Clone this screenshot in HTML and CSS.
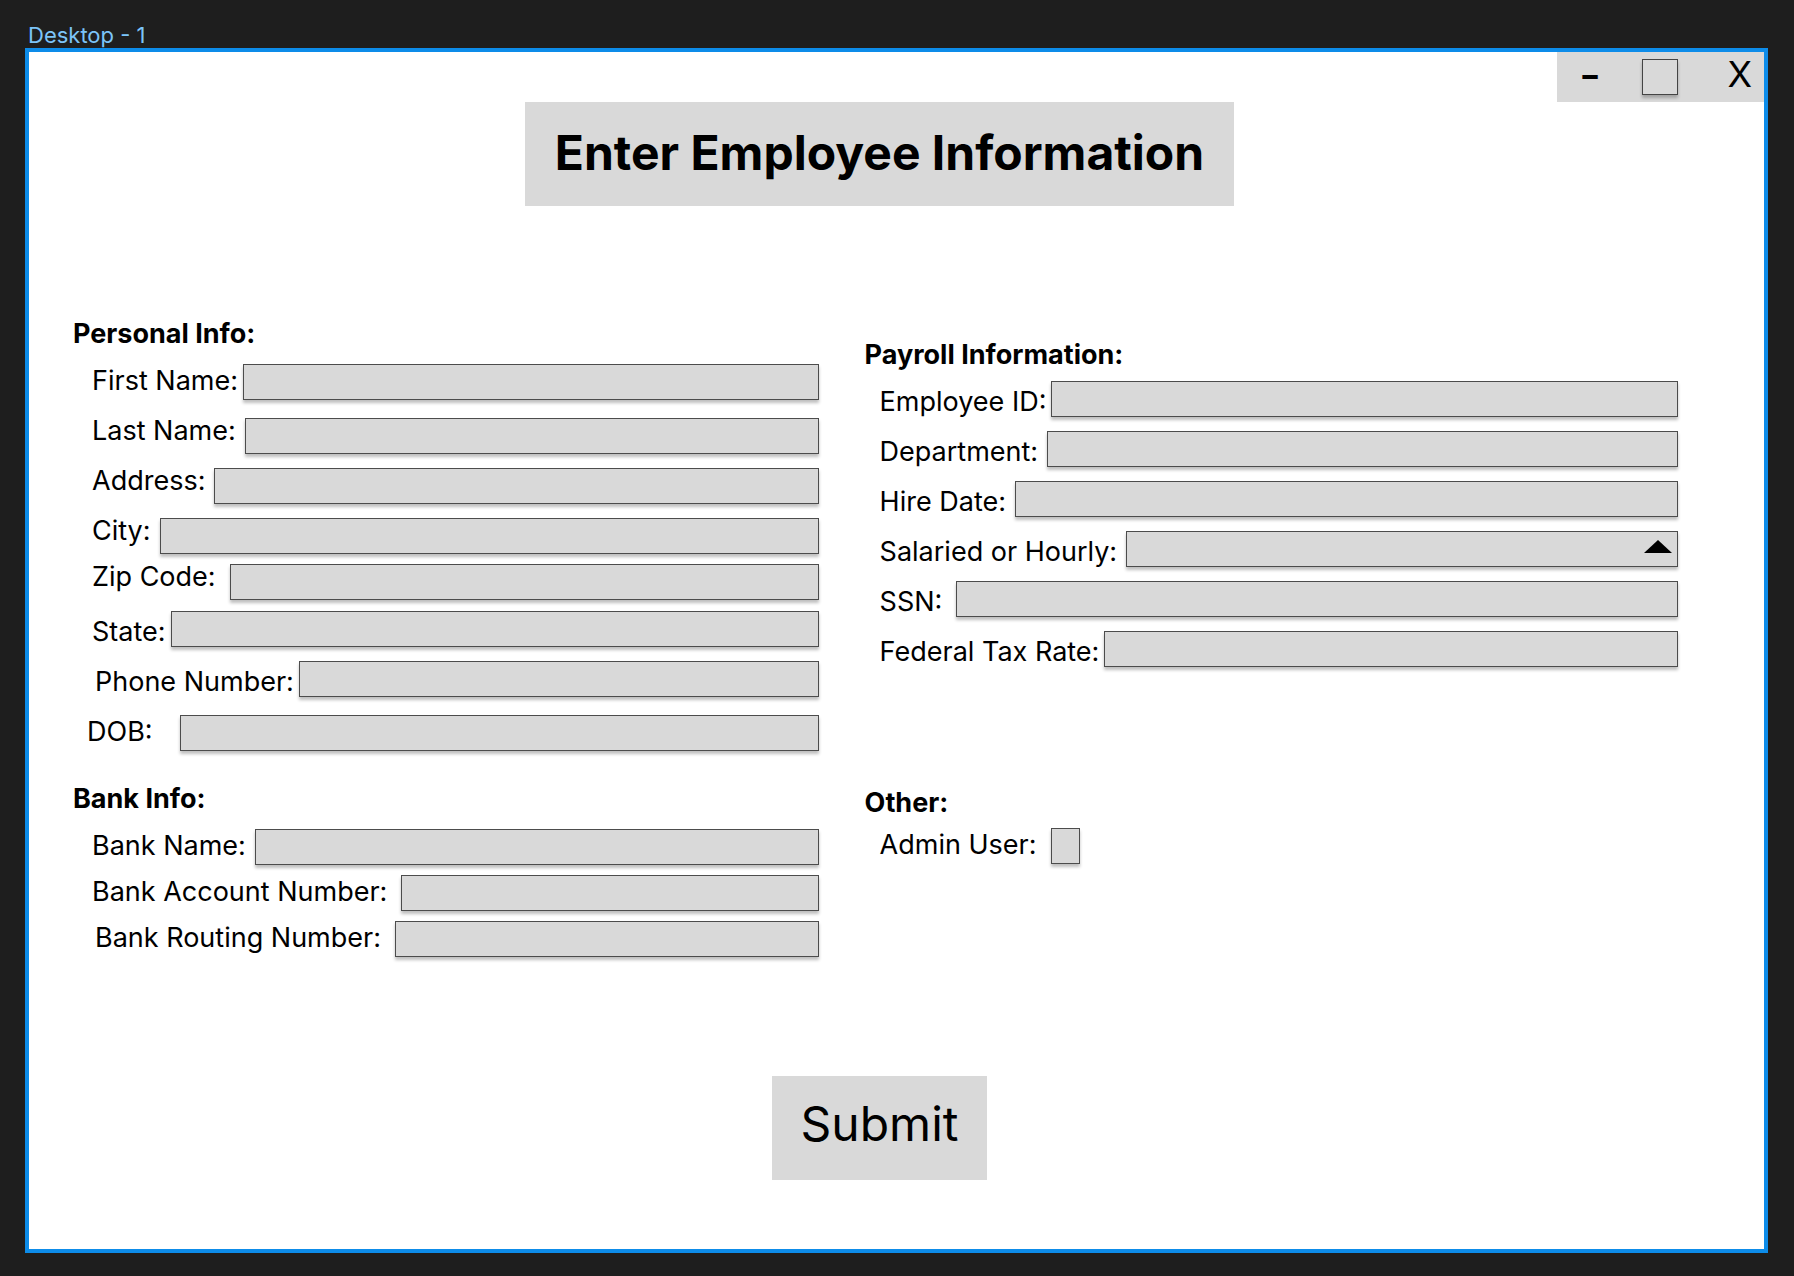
FILE: index.html
```html
<!DOCTYPE html>
<html lang="en">
<head>
<meta charset="utf-8">
<meta name="viewport" content="width=device-width, initial-scale=1">
<title>Enter Employee Information</title>
<link rel="stylesheet" href="styles.css">
</head>
<body>
<p class="frame-name">Desktop - 1</p>
<div class="frame">
  <header class="controls">
    <button type="button" class="control control--minimize">-</button>
    <button type="button" class="control control--maximize" aria-label="Maximize"></button>
    <button type="button" class="control control--close">X</button>
  </header>
  <main class="main">
    <h1 class="title">Enter Employee Information</h1>
    <form class="form">
      <div class="sections">
        <section class="section">
          <h2 class="heading">Personal Info:</h2>
          <div class="field gap-s"><label for="first">First Name:</label><input class="box" id="first" type="text"></div>
          <div class="field gap-m box-low"><label for="last">Last Name:</label><input class="box" id="last" type="text"></div>
          <div class="field gap-m box-low"><label for="address">Address:</label><input class="box" id="address" type="text"></div>
          <div class="field field--tight gap-m box-low"><label for="city">City:</label><input class="box" id="city" type="text"></div>
          <div class="field field--loose gap-l box-low"><label for="zip">Zip Code:</label><input class="box" id="zip" type="text"></div>
          <div class="field gap-s box-high"><label for="state">State:</label><input class="box" id="state" type="text"></div>
          <div class="field field--indent gap-s box-high"><label for="phone">Phone Number:</label><input class="box" id="phone" type="text"></div>
          <div class="field field--outdent gap-xl"><label for="dob">DOB:</label><input class="box" id="dob" type="text"></div>
        </section>
        <section class="section section--payroll">
          <h2 class="heading">Payroll Information:</h2>
          <div class="field gap-s box-high"><label for="employee">Employee ID:</label><input class="box" id="employee" type="text"></div>
          <div class="field gap-m box-high"><label for="department">Department:</label><input class="box" id="department" type="text"></div>
          <div class="field gap-m box-high"><label for="hire">Hire Date:</label><input class="box" id="hire" type="text"></div>
          <div class="field gap-m box-high"><label for="pay">Salaried or Hourly:</label>
            <div class="select">
              <select class="box" id="pay"><option></option></select>
              <svg class="arrow" viewBox="0 0 28 13" aria-hidden="true"><path d="M14 0 28 13H0z"/></svg>
            </div>
          </div>
          <div class="field gap-l box-high"><label for="ssn">SSN:</label><input class="box" id="ssn" type="text"></div>
          <div class="field gap-s box-high"><label for="tax">Federal Tax Rate:</label><input class="box" id="tax" type="text"></div>
        </section>
        <section class="section">
          <h2 class="heading">Bank Info:</h2>
          <div class="field field--tight gap-m"><label for="bank">Bank Name:</label><input class="box" id="bank" type="text"></div>
          <div class="field field--tight gap-l"><label for="account">Bank Account Number:</label><input class="box" id="account" type="text"></div>
          <div class="field field--indent gap-l"><label for="routing">Bank Routing Number:</label><input class="box" id="routing" type="text"></div>
        </section>
        <section class="section section--other">
          <h2 class="heading">Other:</h2>
          <div class="field gap-l"><label for="admin">Admin User:</label><input class="box box--check" id="admin" type="checkbox"></div>
        </section>
      </div>
      <button type="submit" class="submit">Submit</button>
    </form>
  </main>
</div>
</body>
</html>
```
FILE: styles.css
```css
* {
  box-sizing: border-box;
  margin: 0;
}

body {
  display: flex;
  flex-direction: column;
  min-height: 100vh;
  padding: 22px 26px 23px 25px;
  background: #1e1e1e;
  color: #000;
  font-family: Inter, "Liberation Sans", sans-serif;
}

.frame-name {
  padding-left: 3px;
  color: #7cc4f8;
  font-size: 22px;
  line-height: 26px;
}

.frame {
  display: flex;
  flex: 1;
  flex-direction: column;
  border: 4px solid #0d8ce9;
  background: #fff;
}

/* Window buttons */
.controls {
  display: flex;
  align-self: flex-end;
  align-items: flex-start;
  justify-content: space-between;
  width: 207px;
  height: 50px;
  padding: 0 12px 0 22px;
  background: #d9d9d9;
}

.control {
  padding: 0;
  border: 0;
  background: none;
  color: #000;
  font: 36px/44px Inter, "Liberation Sans", sans-serif;
}

.control--minimize {
  font-size: 48px;
  line-height: 46px;
}

.control--maximize {
  width: 36px;
  height: 36px;
  margin: 7px 8px 0 0;
  border: 1px solid #444;
  box-shadow: 0 3px 3px rgba(0, 0, 0, 0.25);
}

.main {
  padding: 0 78px 0 44px;
}

.title {
  width: fit-content;
  margin: 0 auto 111px;
  padding: 22px 30px 24px;
  background: #d9d9d9;
  font-size: 48px;
  line-height: 58px;
}

/* Form sections */
.form {
  display: flex;
  flex-direction: column;
  align-items: center;
}

.sections {
  display: grid;
  grid-template-columns: 11fr 12fr;
  gap: 22px 46px;
  width: 100%;
  padding-right: 8px;
}

.section--payroll {
  padding-top: 21px;
}

.section--other {
  padding-top: 4px;
}

.heading {
  margin-bottom: 8px;
  font-size: 27px;
  line-height: 34px;
}

.section--other .heading {
  margin-bottom: 3px;
}

.field {
  display: flex;
  align-items: flex-start;
  height: 50px;
  padding-left: 19px;
  font-size: 27px;
  line-height: 34px;
}

.section--payroll .field,
.section--other .field {
  padding-left: 15px;
}

.field--tight {
  height: 46px;
}

.field--loose {
  height: 55px;
}

.field--indent {
  padding-left: 22px;
}

.field--outdent {
  padding-left: 14px;
}

.field label {
  padding-top: 5px;
  white-space: nowrap;
}

.gap-s {
  gap: 5px;
}

.gap-m {
  gap: 9px;
}

.gap-l {
  gap: 14px;
}

.gap-xl {
  gap: 27px;
}

.box {
  flex: 1;
  min-width: 0;
  height: 36px;
  margin: 5px 0 0;
  padding: 0 8px;
  border: 1px solid #4c4c4c;
  border-radius: 0;
  background: #d9d9d9;
  box-shadow: 0 3px 3px rgba(0, 0, 0, 0.25);
  color: #000;
  font: 24px Inter, "Liberation Sans", sans-serif;
  appearance: none;
}

.box-low .box {
  margin-top: 9px;
}

.box-high .box {
  margin-top: 1px;
}

.box--check {
  flex: none;
  width: 29px;
}

.select {
  position: relative;
  display: flex;
  flex: 1;
}

.arrow {
  position: absolute;
  top: 10px;
  right: 6px;
  width: 28px;
  height: 13px;
  pointer-events: none;
}

.submit {
  margin: 110px 0 40px;
  padding: 19px 29px 27px;
  border: 0;
  background: #d9d9d9;
  color: #000;
  font: 48px/58px Inter, "Liberation Sans", sans-serif;
}
```
